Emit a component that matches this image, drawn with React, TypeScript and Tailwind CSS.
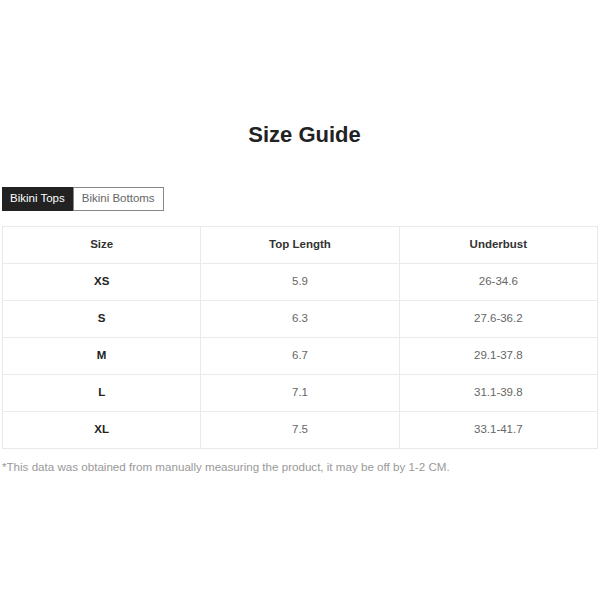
import React, { useState } from 'react';

const rows = [
  { size: 'XS', top: '5.9', under: '26-34.6' },
  { size: 'S', top: '6.3', under: '27.6-36.2' },
  { size: 'M', top: '6.7', under: '29.1-37.8' },
  { size: 'L', top: '7.1', under: '31.1-39.8' },
  { size: 'XL', top: '7.5', under: '33.1-41.7' },
];

export default function App() {
  const [tab, setTab] = useState<'tops' | 'bottoms'>('tops');

  return (
    <div className="w-[600px] h-[600px] bg-white px-[2px] pt-[122px] font-['Liberation_Sans',Arial,sans-serif]">
      <h1 className="pl-[9px] text-center text-[22px] leading-[26px] font-bold text-[#222]">Size Guide</h1>

      {/* Tabs */}
      <div className="mt-[39px] flex">
        <button
          onClick={() => setTab('tops')}
          className={`h-[24px] px-[7px] text-[11.5px] border ${tab === 'tops' ? 'bg-[#222] text-white border-[#222]' : 'bg-white text-[#666] border-[#888]'}`}
        >
          Bikini Tops
        </button>
        <button
          onClick={() => setTab('bottoms')}
          className={`h-[24px] px-[8px] text-[11.5px] border ${tab === 'bottoms' ? 'bg-[#222] text-white border-[#222]' : 'bg-white text-[#666] border-[#888]'}`}
        >
          Bikini Bottoms
        </button>
      </div>

      {/* Table */}
      <table className="mt-[15px] w-full border-collapse table-fixed text-[11.5px]">
        <thead>
          <tr className="h-[37px]">
            <th className="border border-[#eaeaea] font-bold text-[#333]">Size</th>
            <th className="border border-[#eaeaea] font-bold text-[#333]">Top Length</th>
            <th className="border border-[#eaeaea] font-bold text-[#333]">Underbust</th>
          </tr>
        </thead>
        <tbody>
          {rows.map((r) => (
            <tr key={r.size} className="h-[37px]">
              <td className="border border-[#eaeaea] text-center font-bold text-[#222]">{r.size}</td>
              <td className="border border-[#eaeaea] text-center text-[#666]">{r.top}</td>
              <td className="border border-[#eaeaea] text-center text-[#666]">{r.under}</td>
            </tr>
          ))}
        </tbody>
      </table>

      <p className="mt-[10px] text-[11.6px] leading-[16px] text-[#999]">
        *This data was obtained from manually measuring the product, it may be off by 1-2 CM.
      </p>
    </div>
  );
}
